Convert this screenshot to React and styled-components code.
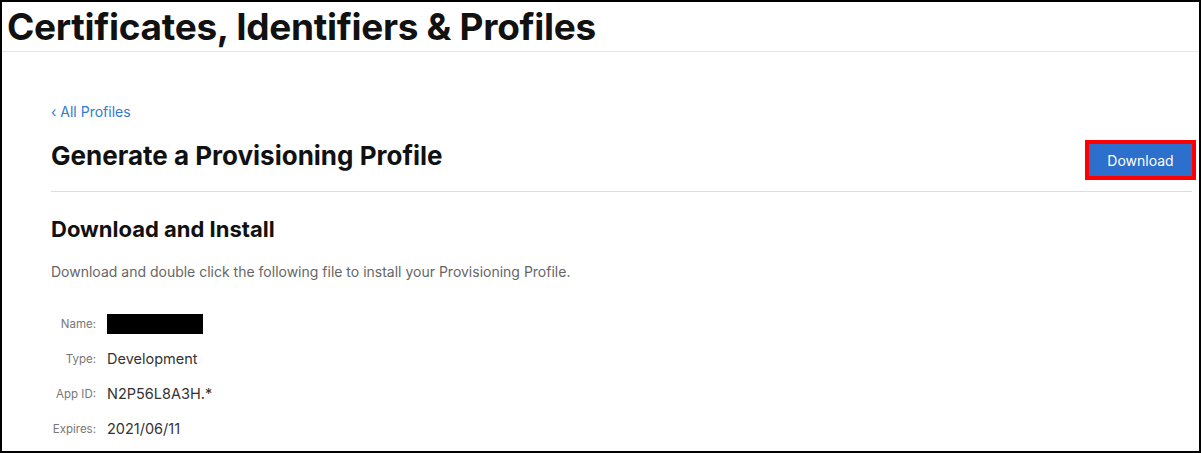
import React from "react";
import styled, { createGlobalStyle } from "styled-components";

const Global = createGlobalStyle`
  html, body { margin: 0; padding: 0; background: #fff; }
  body { font-family: Inter, "Noto Sans", "Liberation Sans", sans-serif; }
`;

const Frame = styled.div`
  box-sizing: border-box;
  width: 1201px;
  height: 453px;
  border: 2px solid #000;
  overflow: hidden;
  background: #fff;
`;

const Header = styled.header`
  height: 49px;
  border-bottom: 1px solid #e6e6e6;
  padding-left: 5px;
  display: flex;
  align-items: center;
`;

const SiteTitle = styled.h1`
  margin: 0;
  font-size: 37px;
  font-weight: 700;
  color: #111;
  letter-spacing: -0.3px;
`;

const Main = styled.main`
  padding: 0 7px 0 49px;
  display: flex;
  flex-direction: column;
`;

const BackLink = styled.a`
  margin-top: 51px;
  font-size: 14px;
  color: #2f7bd1;
  text-decoration: none;
  line-height: 17px;
`;

const TitleRow = styled.div`
  display: flex;
  align-items: flex-start;
  justify-content: space-between;
  margin-top: 20px;
  border-bottom: 1px solid #dcdcdc;
  padding-bottom: 15px;
`;

const PageTitle = styled.h2`
  margin: 0;
  font-size: 26px;
  font-weight: 700;
  color: #111;
  line-height: 32px;
`;

const DownloadButton = styled.button`
  width: 103px;
  height: 32px;
  margin-top: 4px;
  border: none;
  background: #2d6fcc;
  color: #fff;
  font-family: inherit;
  font-size: 14px;
  outline: 4px solid #ff0000;
`;

const SectionTitle = styled.h3`
  margin: 23px 0 0;
  font-size: 22px;
  font-weight: 700;
  color: #111;
  line-height: 28px;
`;

const Description = styled.p`
  margin: 20px 0 0;
  font-size: 14px;
  color: #666;
  line-height: 17px;
`;

const Details = styled.dl`
  margin: 34px 0 0;
  display: grid;
  grid-template-columns: 45px auto;
  column-gap: 11px;
  row-gap: 15px;
  align-items: center;
`;

const Label = styled.dt`
  font-size: 11.5px;
  color: #777;
  text-align: right;
  line-height: 20px;
`;

const Value = styled.dd`
  margin: 0;
  font-size: 14.5px;
  color: #333;
  line-height: 20px;
`;

const Redacted = styled.span`
  display: block;
  width: 96px;
  height: 20px;
  background: #000;
`;

export default function App() {
  return (
    <>
      <Global />
      <Frame>
        <Header>
          <SiteTitle>Certificates, Identifiers &amp; Profiles</SiteTitle>
        </Header>
        <Main>
          <BackLink href="#">‹ All Profiles</BackLink>
          <TitleRow>
            <PageTitle>Generate a Provisioning Profile</PageTitle>
            <DownloadButton>Download</DownloadButton>
          </TitleRow>
          <SectionTitle>Download and Install</SectionTitle>
          <Description>
            Download and double click the following file to install your Provisioning Profile.
          </Description>
          <Details>
            <Label>Name:</Label>
            <Value><Redacted /></Value>
            <Label>Type:</Label>
            <Value>Development</Value>
            <Label>App ID:</Label>
            <Value>N2P56L8A3H.*</Value>
            <Label>Expires:</Label>
            <Value>2021/06/11</Value>
          </Details>
        </Main>
      </Frame>
    </>
  );
}
